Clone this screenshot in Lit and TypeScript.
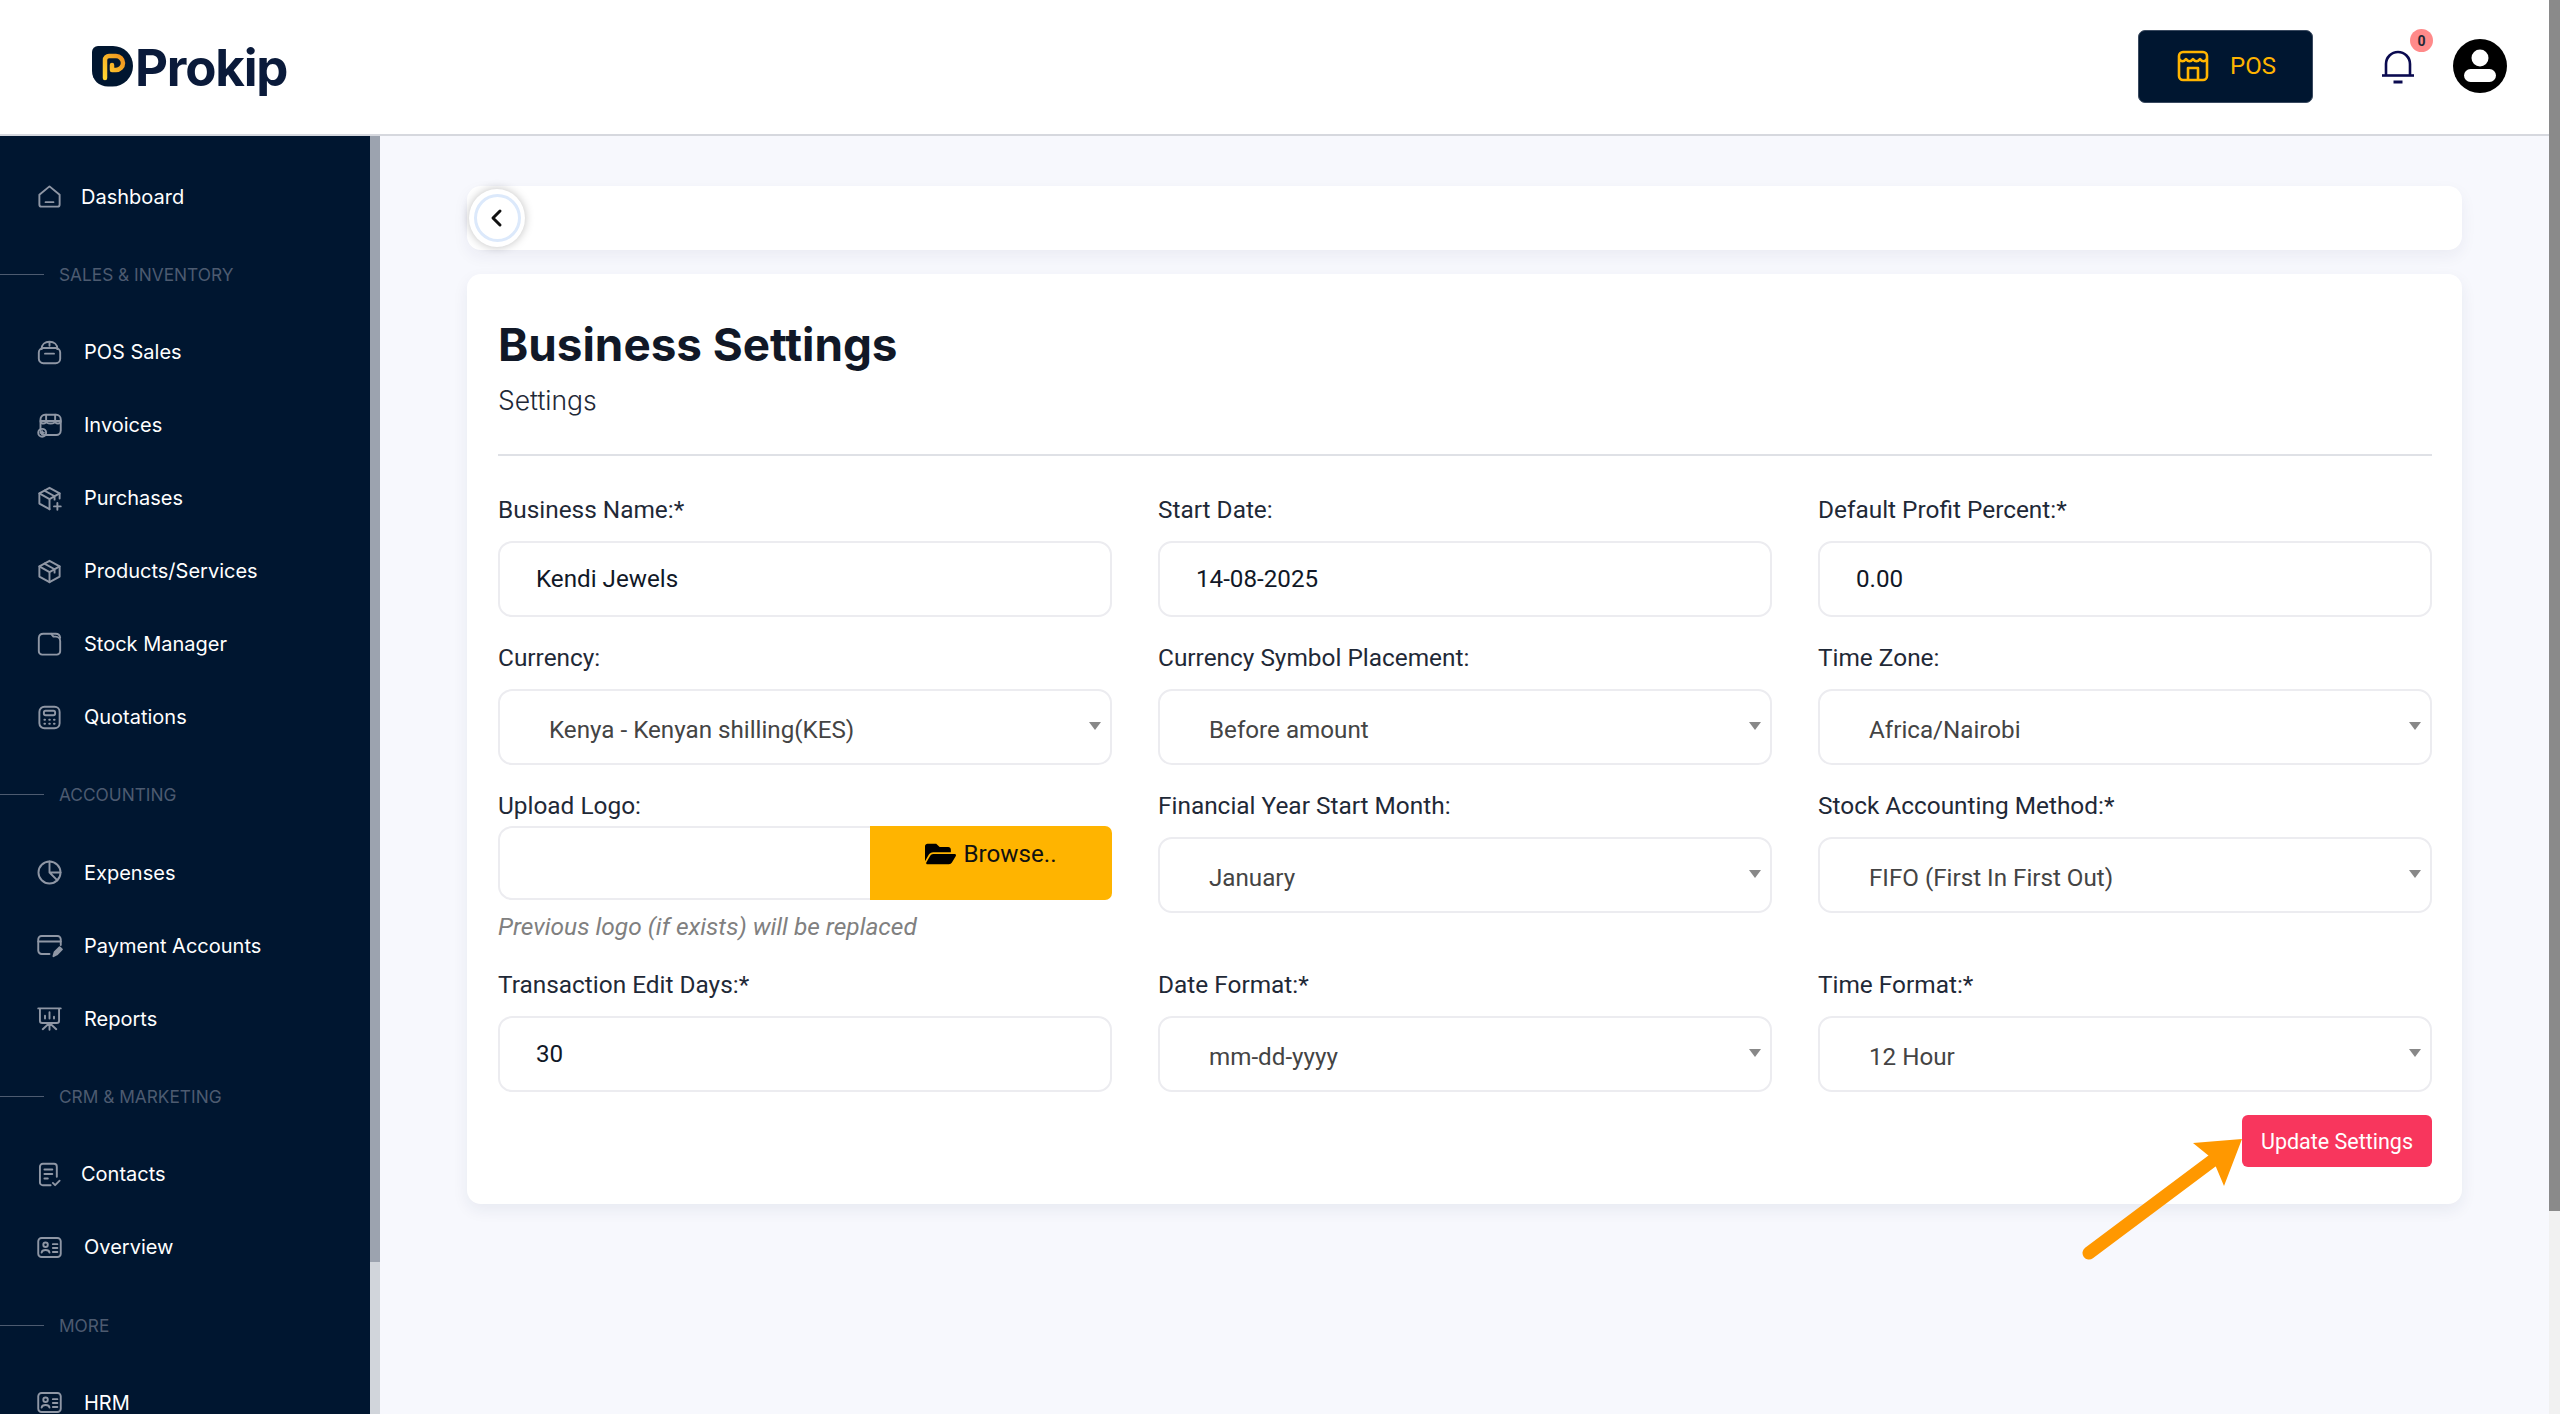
import { LitElement, html, css, svg } from "lit";
import { customElement } from "lit/decorators.js";

const icons: Record<string, unknown> = {
  home: svg`<path d="M3 10.500 12 3l9 7.500V19a2 2 0 0 1-2 2H5a2 2 0 0 1-2-2z"/><path d="M8.500 17h7"/>`,
  bag: svg`<rect x="2.500" y="8" width="19" height="13.500" rx="4"/><path d="M5 9c0-4 3-6.500 7-6.500S19 5 19 9"/><path d="M12 3v3M8 13h8"/>`,
  shop: svg`<rect x="4" y="2.500" width="18" height="18" rx="4"/><path d="M4 8h18M9 2.500v5.500c0 3-5 3-5 0M17 2.500v5.500c0 3 5 3 5 0M9 8c0 3 8 3 8 0"/><circle cx="5.500" cy="18.500" r="3.500"/><path d="M5.500 17v3M4 18.500h3"/>`,
  boxplus: svg`<path d="M21 12V7.500L12 2.500 3 7.500v9l9 5"/><path d="M3 7.500l9 5 9-5M12 12.500v9M7.500 5l9 5v3"/><path d="M19 16v6M16 19h6"/>`,
  box: svg`<path d="M12 2.500l9 5v9l-9 5-9-5v-9z"/><path d="M3 7.500l9 5 9-5M12 12.500v9M7.500 5l9 5v3"/>`,
  folder: svg`<path d="M2.500 6a4 4 0 0 1 4-3.500h7l2 2.500h2a4 4 0 0 1 4 4v9a3 3 0 0 1-3 3h-13a3 3 0 0 1-3-3z"/><path d="M13.500 2.500h4a4 4 0 0 1 4 3.500"/>`,
  calc: svg`<rect x="3" y="2.500" width="18" height="19" rx="4.500"/><rect x="7" y="6" width="10" height="4" rx="1.500"/><path d="M7.500 14h.5M11.800 14h.5M16 14h.5M7.500 17.500h.5M11.800 17.500h.5M16 17.500h.5" stroke-width="1.800"/>`,
  pie: svg`<circle cx="12" cy="12" r="9.800"/><path d="M12 2.200V12l7 7M12 12h9.800"/>`,
  card: svg`<path d="M12 19.500H5a3 3 0 0 1-3-3v-10a3 3 0 0 1 3-3h14a3 3 0 0 1 3 3v5"/><path d="M2 8.500h20"/><path d="M15.500 21.500l1-3.500 4.500-4.500 2 2-4.500 4.500z" fill="currentColor"/>`,
  present: svg`<path d="M2 3h20M3.500 3v11a2 2 0 0 0 2 2h13a2 2 0 0 0 2-2V3"/><path d="M8 12V9.500M12 12V6.500M16 12v-1.500M12 16v6M6 21.500l6-5.500 6 5.500"/>`,
  doc: svg`<path d="M13 21.500H6a2.500 2.500 0 0 1-2.500-2.500V5A2.500 2.500 0 0 1 6 2.500h10A2.500 2.500 0 0 1 18.500 5v9"/><path d="M7.500 7.500h7M7.500 11.500h7M7.500 15.500h3"/><path d="M15 19.500l2 2 4-4"/>`,
  id: svg`<rect x="2" y="3.500" width="20" height="17" rx="3"/><circle cx="8.500" cy="9.500" r="2"/><path d="M5 16.500c.5-3 6.500-3 7 0M15 9h4M15 12.500h4M15 16h4"/>`,
};

type Row =
  | { kind: "item"; label: string; icon: string; tight?: boolean }
  | { kind: "section"; label: string };

const nav: Row[] = [
  { kind: "item", label: "Dashboard", icon: "home", tight: true },
  { kind: "section", label: "Sales & Inventory" },
  { kind: "item", label: "POS Sales", icon: "bag" },
  { kind: "item", label: "Invoices", icon: "shop" },
  { kind: "item", label: "Purchases", icon: "boxplus" },
  { kind: "item", label: "Products/Services", icon: "box" },
  { kind: "item", label: "Stock Manager", icon: "folder" },
  { kind: "item", label: "Quotations", icon: "calc" },
  { kind: "section", label: "Accounting" },
  { kind: "item", label: "Expenses", icon: "pie" },
  { kind: "item", label: "Payment Accounts", icon: "card" },
  { kind: "item", label: "Reports", icon: "present" },
  { kind: "section", label: "CRM & Marketing" },
  { kind: "item", label: "Contacts", icon: "doc", tight: true },
  { kind: "item", label: "Overview", icon: "id" },
  { kind: "section", label: "More" },
  { kind: "item", label: "HRM", icon: "id" },
];

type Field =
  | { type: "input" | "select"; label: string; value: string }
  | { type: "upload"; label: string };

const fields: Field[] = [
  { type: "input", label: "Business Name:*", value: "Kendi Jewels" },
  { type: "input", label: "Start Date:", value: "14-08-2025" },
  { type: "input", label: "Default Profit Percent:*", value: "0.00" },
  { type: "select", label: "Currency:", value: "Kenya - Kenyan shilling(KES)" },
  { type: "select", label: "Currency Symbol Placement:", value: "Before amount" },
  { type: "select", label: "Time Zone:", value: "Africa/Nairobi" },
  { type: "upload", label: "Upload Logo:" },
  { type: "select", label: "Financial Year Start Month:", value: "January" },
  { type: "select", label: "Stock Accounting Method:*", value: "FIFO (First In First Out)" },
  { type: "input", label: "Transaction Edit Days:*", value: "30" },
  { type: "select", label: "Date Format:*", value: "mm-dd-yyyy" },
  { type: "select", label: "Time Format:*", value: "12 Hour" },
];

@customElement("app-root")
export class AppRoot extends LitElement {
  static styles = css`
    :host { display: block; position: relative; width: 2560px; height: 1414px; overflow: hidden; background: #f7f8fd; font-family: Roboto, sans-serif; }
    * { box-sizing: border-box; }
    .shell { display: flex; height: 1414px; }
    .content { flex: 1; min-width: 0; display: flex; flex-direction: column; }
    .pagebar { width: 11px; background: #f1f1f1; flex: none; }
    .pagebar div { height: 1211px; background: #8a8a8a; }

    header { height: 136px; flex: none; background: #fff; border-bottom: 2px solid #d6d8de; display: flex; align-items: center; padding: 0 42px 2px 92px; }
    .logo { display: flex; align-items: center; gap: 2px; }
    .logo svg { width: 41px; height: 41px; display: block; }
    .logo span { font-family: Inter, sans-serif; font-weight: 700; font-size: 51px; line-height: 56px; letter-spacing: -1.200px; color: #0a1a3a; margin-top: 4px; }
    .spacer { flex: 1; }
    .pos { width: 175px; height: 73px; background: #001630; border-radius: 7px; border: 1px solid #3a4a60; display: flex; align-items: center; padding-left: 38px; gap: 21px; color: #ffb400; font-size: 24px; }
    .pos svg { width: 32px; height: 32px; }
    .bell { position: relative; margin-left: 68px; margin-top: 2px; width: 34px; height: 36px; color: #0a0a50; }
    .bell svg { width: 34px; height: 36px; display: block; }
    .badge { position: absolute; left: 29px; top: -20px; width: 23px; height: 23px; border-radius: 50%; background: #ff8a8a; color: #1f2937; font-size: 14px; font-weight: 700; display: flex; align-items: center; justify-content: center; }
    .avatar { margin-left: 38px; width: 54px; height: 54px; display: block; }

    .body { flex: 1; min-height: 0; display: flex; }
    .side { width: 370px; flex: none; background: #001630; padding-top: 24px; overflow: hidden; }
    .sidebar-scroll { width: 10px; flex: none; background: #d1d5db; }
    .sidebar-scroll div { height: 1126px; background: #9ca3af; }
    .item { height: 73px; display: flex; align-items: center; padding-left: 36px; gap: 21px; color: #fff; font-family: Inter, sans-serif; font-size: 20px; }
    .item.tight { gap: 18px; }
    .item svg { width: 27px; height: 27px; flex: none; color: #8f97a5; fill: none; stroke: currentColor; stroke-width: 1.700; stroke-linecap: round; stroke-linejoin: round; }
    .section { height: 82.600px; display: flex; align-items: center; gap: 15px; color: #4d5b70; font-family: Inter, sans-serif; font-size: 17.300px; text-transform: uppercase; }
    .section i { width: 44px; height: 1px; background: #4d5b70; display: block; }

    main { flex: 1; min-width: 0; padding: 50px 87px 0; }
    .topcard { height: 64px; background: #fff; border-radius: 14px; box-shadow: 0 6px 16px rgba(30,40,80,.06); margin-bottom: 24px; display: flex; align-items: center; }
    .back { width: 56px; height: 58px; margin-left: 2px; border-radius: 50%; background: #fff; box-shadow: 0 0 10px rgba(0,0,0,.25); display: flex; align-items: center; justify-content: center; }
    .back div { width: 47px; height: 48px; border-radius: 50%; border: 3px solid #dce9fb; display: flex; align-items: center; justify-content: center; }
    .back svg { width: 22px; height: 22px; fill: none; stroke: #111; stroke-width: 3; stroke-linecap: round; stroke-linejoin: round; }
    .card { background: #fff; border-radius: 14px; box-shadow: 0 6px 16px rgba(30,40,80,.07); padding: 41px 30px 37px 31px; }
    h1 { margin: 0; font-family: Inter, sans-serif; font-weight: 700; font-size: 45.800px; line-height: 60px; color: #111827; }
    .sub { font-size: 26.500px; line-height: 34px; font-weight: 300; color: #1f2937; margin-top: 8px; font-family: Inter, sans-serif; }
    hr { border: 0; height: 2px; background: #dfe1e6; margin: 37px 0 40px; }
    .grid { display: grid; grid-template-columns: repeat(3, 1fr); column-gap: 46px; row-gap: 27px; }
    label { display: block; font-size: 24.400px; line-height: 28px; color: #1f2937; margin-bottom: 17px; }
    label.up { margin-bottom: 6px; }
    .box { height: 76px; border: 2px solid #ececf0; border-radius: 14px; background: #fff; display: flex; align-items: center; font-size: 24.200px; color: #111827; padding-left: 36px; }
    .box.sel { justify-content: space-between; padding: 0 9px 0 49px; color: #444; }
    .box.sel span { padding-top: 5px; }
    .box.sel i { border-left: 6px solid transparent; border-right: 6px solid transparent; border-top: 8px solid #888; margin-bottom: 3px; }
    .upload { display: flex; height: 74px; }
    .upload div { flex: 1; border: 2px solid #ececf0; border-right: 0; border-radius: 14px 0 0 14px; }
    .browse { width: 242px; background: #ffb400; border-radius: 0 7px 7px 0; display: flex; justify-content: center; gap: 7px; padding-top: 14px; font-size: 24.200px; line-height: 28px; color: #111; }
    .browse svg { width: 31px; height: 28px; fill: #000; }
    .help { margin-top: 10px; padding-bottom: 1px; font-size: 24.500px; line-height: 33px; font-style: italic; font-weight: 400; color: #808080; }
    .foot { display: flex; justify-content: flex-end; margin-top: 23px; }
    .update { width: 190px; height: 52px; background: #f8365d; border-radius: 6px; color: #fff; font-size: 21.500px; display: flex; align-items: center; justify-content: center; }
    .arrow { position: absolute; left: 2080px; top: 1130px; width: 170px; height: 130px; }
  `;

  private field(f: Field) {
    if (f.type === "upload") {
      return html`<div>
        <label class="up">${f.label}</label>
        <div class="upload"><div></div><span class="browse"><svg viewBox="0 0 576 512"><path d="M572.694 292.093L500.27 416.248A63.997 63.997 0 0 1 444.989 448H45.025c-18.523 0-30.064-20.093-20.731-36.093l72.424-124.155A64 64 0 0 1 152 256h399.964c18.523 0 30.064 20.093 20.73 36.093zM152 224h328v-48c0-26.51-21.49-48-48-48H272l-64-64H48C21.49 64 0 85.49 0 112v278.046l69.077-118.418C86.214 242.25 117.989 224 152 224z"/></svg>Browse..</span></div>
        <div class="help">Previous logo (if exists) will be replaced</div>
      </div>`;
    }
    return html`<div>
      <label>${f.label}</label>
      ${f.type === "select"
        ? html`<div class="box sel"><span>${f.value}</span><i></i></div>`
        : html`<div class="box">${f.value}</div>`}
    </div>`;
  }

  render() {
    return html`<div class="shell">
      <div class="content">
        <header>
          <div class="logo">
            <svg viewBox="0 0 41 41">
              <defs><linearGradient id="g" x1="0" y1="1" x2="1" y2="0"><stop offset="0" stop-color="#ffd531"/><stop offset="1" stop-color="#f0921e"/></linearGradient></defs>
              <path d="M6 0h15a20 20 0 0 1 20 20 20.500 20.500 0 0 1-20.500 20.500H16C7 40.500 0 34 0 25V6a6 6 0 0 1 6-6z" fill="#001630"/>
              <path d="M13 32V14a4 4 0 0 1 4-4h7a7 7 0 0 1 0 14h-4v-5" fill="none" stroke="url(#g)" stroke-width="4.500" stroke-linecap="round" stroke-linejoin="round"/>
            </svg>
            <span>Prokip</span>
          </div>
          <div class="spacer"></div>
          <div class="pos">
            <svg viewBox="0 0 32 32" fill="none" stroke="#ffb400" stroke-width="2.600" stroke-linejoin="round"><rect x="2" y="2" width="28" height="28" rx="4"/><path d="M2 9c2 3 5 3 7 0 2 3 5 3 7 0 2 3 5 3 7 0 2 3 5 3 7 0"/><path d="M11 30V18h10v12"/></svg>
            POS
          </div>
          <div class="bell">
            <svg viewBox="0 0 34 36" fill="none" stroke="currentColor" stroke-width="2.600"><path d="M5 26V15a12 12 0 0 1 24 0v11"/><path d="M1 26.500h32"/><path d="M12.500 33h9" stroke-width="3"/></svg>
            <div class="badge">0</div>
          </div>
          <svg class="avatar" viewBox="0 0 54 54"><circle cx="27" cy="27" r="27" fill="#000"/><circle cx="27" cy="19" r="8.500" fill="#fff"/><rect x="11" y="30" width="32" height="13" rx="6.500" fill="#fff"/></svg>
        </header>
        <div class="body">
          <aside class="side">
            ${nav.map((r) =>
              r.kind === "section"
                ? html`<div class="section"><i></i>${r.label}</div>`
                : html`<div class="item ${r.tight ? "tight" : ""}"><svg viewBox="0 0 24 24">${icons[r.icon]}</svg>${r.label}</div>`
            )}
          </aside>
          <div class="sidebar-scroll"><div></div></div>
          <main>
            <div class="topcard"><div class="back"><div><svg viewBox="0 0 22 22"><path d="M14 4l-7 7 7 7"/></svg></div></div></div>
            <section class="card">
              <h1>Business Settings</h1>
              <div class="sub">Settings</div>
              <hr />
              <div class="grid">${fields.map((f) => this.field(f))}</div>
              <div class="foot"><div class="update">Update Settings</div></div>
            </section>
          </main>
        </div>
      </div>
      <div class="pagebar"><div></div></div>
    </div>
    <svg class="arrow" viewBox="2080 1130 170 130">
      <path d="M2089 1253L2216 1158" stroke="#ff9800" stroke-width="13" stroke-linecap="round" fill="none"/>
      <path d="M2242 1139L2193 1143L2209 1156L2216 1167L2224 1186z" fill="#ff9800"/>
    </svg>`;
  }
}
